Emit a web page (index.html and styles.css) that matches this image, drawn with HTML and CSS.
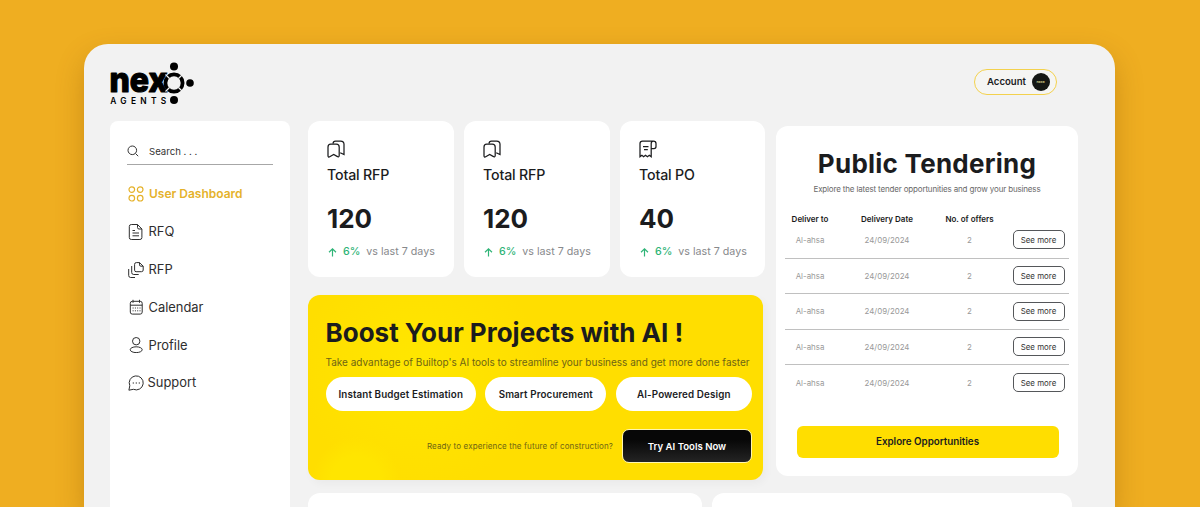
FILE: index.html
```html
<!DOCTYPE html>
<html lang="en">
<head>
<meta charset="utf-8">
<title>Nexo Agents</title>
<link rel="stylesheet" href="styles.css">
</head>
<body>
<svg class="defs" width="0" height="0">
  <symbol id="bookmarks" viewBox="0 0 18 18">
    <path d="M6 3.600C6.100 1.800 6.700 1 8.500 1h5.200C16 1 17 2 17 4.200v10.300l-3.800-1.800"/>
    <path d="M3.700 4h5.600c1.800 0 2.900 1 2.900 2.900v8.700c0 1.200-.8 1.600-1.700 1L6.700 14.500l-4 2.300c-1 .6-1.700 0-1.700-1V6.900C1 5 1.900 4 3.700 4z"/>
  </symbol>
</svg>
<div class="window">
  <header class="topbar">
    <svg class="logo" width="86" height="44" viewBox="0 0 86 44">
      <text class="logo-name" x="-.5" y="30" textLength="58" lengthAdjust="spacingAndGlyphs">nex</text>
      <text class="logo-sub" x="0.300" y="41.700" textLength="56">AGENTS</text>
      <circle cx="64" cy="21" r="8.600" fill="none" stroke="#000" stroke-width="3.800"/>
      <path d="M55.500 12.500l4 4M72.500 12.500l-4 4M55.500 29.500l4-4M72.500 29.500l-4-4" stroke="#f2f2f2" stroke-width="1.200"/>
      <circle cx="64" cy="4.500" r="4"/><circle cx="80" cy="21" r="3.800"/><circle cx="64" cy="38" r="4"/>
    </svg>
    <button class="account">Account <span class="avatar">nexo</span></button>
  </header>
  <div class="body">
    <aside class="sidebar">
      <label class="search">
        <svg width="12" height="12" viewBox="0 0 12 12"><circle cx="5.300" cy="5.300" r="4.300"/><path d="M8.500 8.500l2.700 2.700"/></svg>
        <span>Search . . .</span>
      </label>
      <nav class="nav">
        <a class="item active"><svg viewBox="0 0 16 16"><circle cx="3.800" cy="3.600" r="2.800"/><circle cx="12.200" cy="3.600" r="2.800"/><circle cx="3.800" cy="12.200" r="2.800"/><circle cx="12.200" cy="12.200" r="2.800"/></svg><span>User Dashboard</span></a>
        <a class="item"><svg viewBox="0 0 16 16"><path d="M9.500.5H3.300Q1.300.5 1.300 2.500v11q0 2 2 2h8.600q2 0 2-2V5zM9.500.5v3q0 1.500 1.500 1.500h2.900M4.500 6.500h2.500M4.500 9h6.500M4.500 11.800h6.500"/></svg><span>RFQ</span></a>
        <a class="item"><svg viewBox="0 0 16 16"><path d="M11.500.6H8.300Q6.600.6 6.600 2.300v5.900q0 1.500 1.500 1.500h5.400q1.700 0 1.700-1.700V4.200zM11.500.6v2.200q0 1.400 1.400 1.400h2.300M3.700 4v6.500q0 2 2 2h5M.7 7v6.500q0 2 2 2H7"/></svg><span>RFP</span></a>
        <a class="item"><svg viewBox="0 0 16 16"><path d="M4.300 2.300h7.900q2 0 2 2v8.800q0 2-2 2H4.300q-2 0-2-2V4.300q0-2 2-2zM2.300 6.200h11.900M5 .8v3M11.500.8v3"/><path d="M4.600 9h8M4.600 11.800h8" stroke-dasharray="1 1.300"/></svg><span>Calendar</span></a>
        <a class="item"><svg viewBox="0 0 16 16"><circle cx="8.200" cy="4.200" r="3.700"/><ellipse cx="8.200" cy="12.700" rx="6" ry="2.900"/></svg><span>Profile</span></a>
        <a class="item support"><svg viewBox="0 0 16 16"><path d="M1.800 10.700A7 7 0 1 1 5.400 14.300L.9 15.200z"/><path d="M4.700 8h7.500" stroke-dasharray="1.300 1.700"/></svg><span>Support</span></a>
      </nav>
    </aside>
    <main class="content">
      <div class="upper">
        <div class="center">
          <section class="stats">
            <article class="card stat"><svg><use href="#bookmarks"/></svg><h3>Total RFP</h3><strong>120</strong><p><svg class="up" viewBox="0 0 9 9"><path d="M4.500 8.500V1M1 4.300L4.500.9 8 4.300"/></svg><b>6%</b><span>vs last 7 days</span></p></article>
            <article class="card stat"><svg><use href="#bookmarks"/></svg><h3>Total RFP</h3><strong>120</strong><p><svg class="up" viewBox="0 0 9 9"><path d="M4.500 8.500V1M1 4.300L4.500.9 8 4.300"/></svg><b>6%</b><span>vs last 7 days</span></p></article>
            <article class="card stat"><svg viewBox="0 0 18 18"><path d="M3.500 1h11Q17 1 17 3.500v3q0 2-2 2h-2.800M14.500 1q-2.300 0-2.300 2.500v13.300l-1.900-1.500-1.900 1.500-1.900-1.500-1.900 1.500-1.700-1.500L1 16.800V3.500Q1 1 3.500 1zM4 6.500h5.500M5 9.500h3.800"/></svg><h3>Total PO</h3><strong>40</strong><p><svg class="up" viewBox="0 0 9 9"><path d="M4.500 8.500V1M1 4.300L4.500.9 8 4.300"/></svg><b>6%</b><span>vs last 7 days</span></p></article>
          </section>
          <section class="banner">
            <h2>Boost Your Projects with AI !</h2>
            <p class="lead">Take advantage of Builtop's AI tools to streamline your business and get more done faster</p>
            <div class="pills"><span class="pill budget">Instant Budget Estimation</span><span class="pill procure">Smart Procurement</span><span class="pill design">AI-Powered Design</span></div>
            <div class="cta"><span class="ready">Ready to experience the future of construction?</span><button>Try AI Tools Now</button></div>
          </section>
        </div>
        <section class="card tender">
          <h2>Public Tendering</h2>
          <p class="sub">Explore the latest tender opportunities and grow your business</p>
          <div class="table">
            <div class="row head"><span>Deliver to</span><span>Delivery Date</span><span>No. of offers</span></div>
            <div class="row first"><span>Al-ahsa</span><span>24/09/2024</span><span>2</span><button>See more</button></div>
            <div class="row"><span>Al-ahsa</span><span>24/09/2024</span><span>2</span><button>See more</button></div>
            <div class="row"><span>Al-ahsa</span><span>24/09/2024</span><span>2</span><button>See more</button></div>
            <div class="row"><span>Al-ahsa</span><span>24/09/2024</span><span>2</span><button>See more</button></div>
            <div class="row"><span>Al-ahsa</span><span>24/09/2024</span><span>2</span><button>See more</button></div>
          </div>
          <button class="explore">Explore Opportunities</button>
        </section>
      </div>
      <div class="lower"><section class="card"></section><section class="card"></section></div>
    </main>
  </div>
</div>
</body>
</html>
```
FILE: styles.css
```css
* { box-sizing: border-box; }
body { margin: 0; height: 507px; overflow: hidden; padding: 44px 85px 0 84px; background: #efae21; font-family: Inter, "Liberation Sans", sans-serif; color: #1b1c1e; }
h2, h3, p { margin: 0; }
button { font: inherit; color: inherit; padding: 0; white-space: nowrap; }
svg { fill: none; stroke: currentColor; flex: none; }
.defs { position: absolute; }
.window { height: 463px; overflow: hidden; border-radius: 24px 24px 0 0; background: #f2f2f2; padding: 0 37px 0 26px; box-shadow: 0 12px 28px rgba(130, 75, 0, .32); }
.topbar { height: 77px; display: flex; justify-content: space-between; padding: 18px 21px 0 0; }
.logo { fill: #000; stroke: none; overflow: visible; }
.logo-name { font: 800 34px Inter, sans-serif; stroke: #000; stroke-width: 1.200px; stroke-linejoin: round; }
.logo-sub { font: 600 8.400px Inter, sans-serif; }
.account { margin-top: 7px; width: 83px; height: 26px; border: 1.500px solid #f3d14d; border-radius: 13px; background: #f5f5f3; display: flex; align-items: center; justify-content: flex-end; gap: 5.500px; padding: 0 6.500px 1px 0; font-size: 9.600px; font-weight: 600; }
.avatar { width: 18px; height: 18px; margin-top: 1px; border-radius: 50%; background: #151714; color: #d7d78b; font-size: 3.500px; line-height: 18px; text-align: center; }
.body { display: flex; gap: 18px; height: 500px; }
.sidebar { width: 180px; flex: none; background: #fff; border-radius: 8px 8px 0 0; padding: 18px 17px; }
.card { background: #fff; border-radius: 12px; }
.search { display: flex; align-items: center; gap: 10px; height: 26px; padding-bottom: 1px; border-bottom: 1.500px solid #a7a7a7; font-size: 9.600px; color: #333; }
.nav { padding: 10px 0 0 1px; color: #2e2e2e; }
.item { display: flex; align-items: center; gap: 5px; height: 37.900px; font-size: 12.900px; margin-left: -.5px; }
.item:not(.active):not(.support) { padding-bottom: .4px; }
.item svg { width: 16px; height: 16px; stroke-width: 1; }
.item.active { margin-left: 0; color: #e5b22b; font-weight: 600; font-size: 12px; }
.active svg { stroke-width: 1.200; }
.item.support { gap: 4px; padding-bottom: 1px; }
.content { flex: none; width: 770px; }
.upper { display: flex; gap: 11px; }
.center { width: 457px; }
.stats { display: grid; grid-template-columns: 146px 146px 145px; gap: 10px; }
.stat { height: 156px; padding: 18px 0 0 19px; }
.stat > svg { display: block; width: 18px; height: 20px; stroke-width: 1.250; }
.stat h3 { font-size: 14.200px; line-height: 20px; font-weight: 500; margin-top: 6px; letter-spacing: -.16px; }
.stat strong { display: block; font-size: 26px; line-height: 32px; margin-top: 18px; font-weight: 700; }
.stat p { display: flex; align-items: center; font-size: 10.700px; line-height: 16px; margin-top: 9px; padding-left: 1px; color: #87898c; white-space: nowrap; }
.stat b { color: #2fb477; font-weight: 500; margin: 0 6px; }
.up { width: 9px; height: 9px; color: #2fb477; stroke-width: 1.200; }
.banner { width: 455px; height: 185px; margin-top: 18px; border-radius: 12px; padding: 20px 11px 0 17.500px; background: radial-gradient(circle at 48px 186px, #ffe500 0 25px, transparent 44px), radial-gradient(circle at 112px 75px, #ffe700 0, transparent 120px), #ffde00; box-shadow: 3px 4px 8px rgba(0, 0, 0, .035); white-space: nowrap; }
.banner h2 { font-size: 26px; line-height: 36px; font-weight: 700; }
.lead { font-size: 10px; line-height: 16px; margin-top: 3px; color: #6e6514; }
.pills { display: flex; gap: 9.500px; margin-top: 7px; }
.pill { height: 34px; border-radius: 17px; background: #fff; display: grid; place-items: center; font-size: 9.800px; font-weight: 600; letter-spacing: .13px; }
.budget { width: 151px; }
.procure { width: 121px; }
.design { width: 137px; }
.cta { display: flex; align-items: center; justify-content: flex-end; gap: 9px; margin-top: 18px; }
.ready { font-size: 8px; letter-spacing: .12px; color: #6e6514; }
.cta button { width: 130px; height: 34px; border: 1px solid #fff6b0; border-radius: 7px; background: linear-gradient(#070707 0 30%, #242424); color: #fff; font-size: 9.600px; font-weight: 600; }
.tender { width: 302px; height: 350px; margin-top: 5px; padding: 20px 9px 0; text-align: center; white-space: nowrap; }
.tender h2 { font-size: 26px; line-height: 36px; font-weight: 700; letter-spacing: .25px; }
.sub { font-size: 8px; line-height: 12px; margin-top: 1px; letter-spacing: -.16px; color: #696969; }
.table { margin-top: 17px; width: 284px; }
.row { display: grid; grid-template-columns: 50px 104px 61px 60px; align-items: center; height: 35.500px; border-bottom: 1px solid #c0c0c0; font-size: 7.900px; color: #999; }
.row > * { justify-self: center; }
.row button { margin-left: 17px; width: 52px; height: 19px; border: 1px solid #55575a; border-radius: 5px; background: #fff; font-size: 7.900px; color: #333; }
.head { height: 14px; border: 0; color: #191919; font-weight: 600; font-size: 8px; }
.first { height: 32.500px; padding-bottom: 4px; }
.row:last-child { border: 0; }
.explore { display: block; width: 262px; height: 32px; margin: 25px 0 0 11.500px; border: 0; border-radius: 6px; background: #ffde00; font-size: 9.800px; font-weight: 600; }
.lower { display: grid; grid-template-columns: 394px 360px; gap: 10px; margin-top: 13px; }
.lower .card { height: 60px; }
```
